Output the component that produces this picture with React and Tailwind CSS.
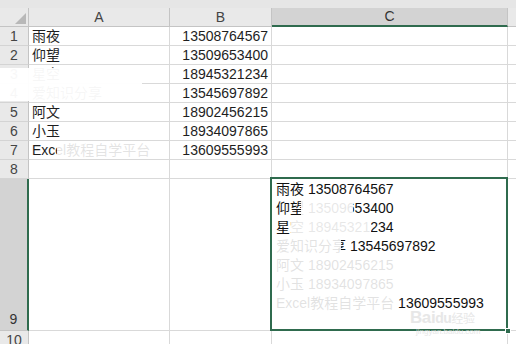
import React from 'react';

// sheet data: column A names, column B phone numbers
const rows = [
  ['雨夜', '13508764567'],
  ['仰望', '13509653400'],
  ['星空', '18945321234'],
  ['爱知识分享', '13545697892'],
  ['阿文', '18902456215'],
  ['小玉', '18934097865'],
  ['Excel教程自学平台', '13609555993'],
];

const cols = 'grid grid-cols-[29px_141px_102px_236px_1fr]';
const rowHead = 'bg-[#e9e9e9] border-r border-b border-r-[#c4c4c4] border-b-[#d4d4d4] flex items-end justify-center text-[#444] leading-[18px]';
const cell = 'border-r border-b border-[#d9d9d9] overflow-visible whitespace-nowrap leading-[18px]';

export default function App() {
  const merged = rows.map(([n, p]) => `${n} ${p}`).join('\n');

  return (
    <div className="relative w-[516px] h-[344px] overflow-hidden bg-white text-[14px] text-[#1e1e1e] font-['Liberation_Sans','Noto_Sans_CJK_SC',sans-serif]">
      <div className="h-[8px] bg-[#e6e6e6]" />

      {/* column headers */}
      <div className={`${cols} h-[19px]`}>
        <div className="relative bg-[#e9e9e9] border-r border-b border-[#c4c4c4]">
          <svg className="absolute right-[2px] bottom-[2px]" width="11" height="11" viewBox="0 0 11 11">
            <polygon points="11,0 11,11 0,11" fill="#b8b8b8" />
          </svg>
        </div>
        <div className="bg-[#e9e9e9] border-r border-b border-[#c4c4c4] text-center text-[#444] leading-[18px]">A</div>
        <div className="bg-[#e9e9e9] border-r border-b border-[#c4c4c4] text-center text-[#444] leading-[18px]">B</div>
        <div className="bg-[#d3d3d3] border-r border-[#c4c4c4] border-b-2 border-b-[#2f6b4e] text-center text-[#333] leading-[17px]">C</div>
        <div className="bg-[#e9e9e9] border-b border-[#c4c4c4]" />
      </div>

      {/* rows 1-8 */}
      {[...rows, ['', '']].map(([name, phone], i) => (
        <div key={i} className={`${cols} h-[19px]`}>
          <div className={rowHead}>{i + 1}</div>
          <div className={`${cell} pl-[3px]`}>{name}</div>
          <div className={`${cell} pr-[3px] text-right`}>{phone}</div>
          <div className={cell} />
          <div className="border-b border-[#d9d9d9]" />
        </div>
      ))}

      {/* row 9 with the joined text in C9 */}
      <div className={`${cols} h-[152px]`}>
        <div className="bg-[#d3d3d3] border-r-2 border-b border-r-[#2f6b4e] border-b-[#c4c4c4] flex items-end justify-center text-[#333] leading-[20px] pb-[1px]">9</div>
        <div className={cell} />
        <div className={cell} />
        <div className={`${cell} relative pl-[4px] pt-[1px] whitespace-pre leading-[19px] text-[#111]`}>
          {merged}
          <div className="absolute -top-[2px] -left-[2px] -right-[1px] -bottom-[1px] border-2 border-[#2f6b4e]" />
          <div className="absolute -right-[4px] -bottom-[4px] w-[6px] h-[6px] bg-[#2f6b4e] border border-white" />
        </div>
        <div className="border-b border-[#d9d9d9]" />
      </div>

      {/* row 10 */}
      <div className={`${cols} h-[20px]`}>
        <div className="bg-[#e9e9e9] border-r border-[#c4c4c4] text-center text-[#444] leading-[18px]">10</div>
        <div className="border-r border-[#d9d9d9]" />
        <div className="border-r border-[#d9d9d9]" />
        <div className="border-r border-[#d9d9d9]" />
        <div />
      </div>

      {/* washed-out watermark patches lying over the sheet */}
      <div className="absolute left-0 top-[68px] w-[142px] h-[33px] bg-[#ffffff] opacity-[0.96]" />
      <div className="absolute left-[57px] top-[141px] w-[112px] h-[17px] bg-[#ffffff] opacity-[0.88]" />
      <div className="absolute left-[301px] top-[200px] w-[52px] h-[18px] bg-[#ffffff] opacity-[0.9]" />
      <div className="absolute left-[291px] top-[219px] w-[80px] h-[18px] bg-[#ffffff] opacity-[0.9]" />
      <div className="absolute left-[273px] top-[238px] w-[68px] h-[19px] bg-[#ffffff] opacity-[0.88]" />
      <div className="absolute left-[273px] top-[257px] w-[123px] h-[58px] bg-[#ffffff] opacity-[0.88]" />

      {/* Baidu jingyan watermark */}
      <div className="absolute left-[410px] top-[309px] text-[#e2e2e2] opacity-80 leading-none">
        <div className="text-[17px] font-bold tracking-tight">Bai<span className="text-[14px]">du</span><span className="text-[12px] font-normal">经验</span></div>
        <div className="text-[8px] mt-[2px] pl-[6px]">jingyan.baidu.com</div>
      </div>
    </div>
  );
}
